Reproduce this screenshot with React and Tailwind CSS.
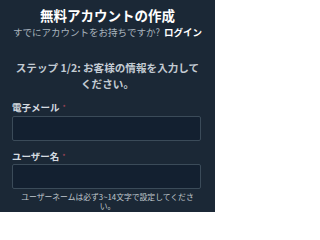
export default function App() {
  const font = { fontFamily: '"Noto Sans CJK JP", "Noto Sans", sans-serif' };
  return (
    <div className="w-[215px] h-[212px] overflow-hidden bg-[#1b2836] flex flex-col items-center" style={font}>
      <h1 className="mt-[6px] text-[13.5px] leading-[18px] font-bold text-white">無料アカウントの作成</h1>
      <p className="mt-[1px] text-[9.5px] leading-[14px] text-[#a9b4be] whitespace-nowrap">
        すでにアカウントをお持ちですか?<span className="ml-[4px] font-bold text-white">ログイン</span>
      </p>
      <h2 className="mt-[21px] w-[200px] text-center text-[10.6px] leading-[16px] font-bold text-[#c3cbd3]">
        ステップ 1/2: お客様の情報を入力して<br />ください。
      </h2>
      <div className="mt-[8px] w-full px-[12px] flex flex-col">
        <label className="text-[9.5px] leading-[14px] font-bold text-[#d5dbe0]">
          電子メール<span className="ml-[3px] text-[#b8495c] font-normal text-[7px] align-top">*</span>
        </label>
        <div className="mt-[2px] h-[25px] w-[189px] bg-[#132030] border border-[#3b4b59] rounded-[2px]" />
        <label className="mt-[8px] text-[9.5px] leading-[14px] font-bold text-[#d5dbe0]">
          ユーザー名<span className="ml-[3px] text-[#b8495c] font-normal text-[7px] align-top">*</span>
        </label>
        <div className="mt-[1px] h-[25px] w-[189px] bg-[#132030] border border-[#3b4b59] rounded-[2px]" />
        <p className="mt-[4px] px-[6px] text-center text-[7.8px] leading-[8.5px] text-[#c0c8cf]">
          ユーザーネームは必ず3~14文字で設定してください。
        </p>
      </div>
    </div>
  );
}
